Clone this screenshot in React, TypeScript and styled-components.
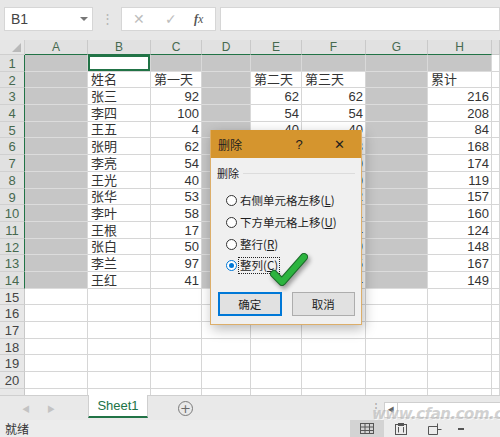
import styled, { createGlobalStyle } from 'styled-components'

const GlobalStyle = createGlobalStyle`
  html, body { margin: 0; padding: 0; }
  body {
    width: 500px;
    height: 437px;
    overflow: hidden;
    background: #fff;
    font-family: "Liberation Sans", "Noto Sans CJK SC", sans-serif;
  }
`

type Val = string | number | null

const COLS = [63, 63, 51, 49, 51, 64, 62, 64]
const LETTERS = ['A', 'B', 'C', 'D', 'E', 'F', 'G', 'H', '']
const ROW_H = 16.7

const data: Val[][] = [
  [null, null, null, null, null, null, null, null],
  [null, '姓名', '第一天', null, '第二天', '第三天', null, '累计'],
  [null, '张三', 92, null, 62, 62, null, 216],
  [null, '李四', 100, null, 54, 54, null, 208],
  [null, '王五', 4, null, 40, 40, null, 84],
  [null, '张明', 62, null, 53, 53, null, 168],
  [null, '李亮', 54, null, 60, 60, null, 174],
  [null, '王光', 40, null, 39, 40, null, 119],
  [null, '张华', 53, null, 52, 52, null, 157],
  [null, '李叶', 58, null, 51, 51, null, 160],
  [null, '王根', 17, null, 53, 54, null, 124],
  [null, '张白', 50, null, 49, 49, null, 148],
  [null, '李兰', 97, null, 35, 35, null, 167],
  [null, '王红', 41, null, 54, 54, null, 149],
]
while (data.length < 21) data.push([null, null, null, null, null, null, null, null])

const isShaded = (r: number, c: number) => {
  if (c > 7) return false
  if (r === 0) return c !== 1
  return r < 14 && (c === 0 || c === 3 || c === 6)
}

const Page = styled.div`
  position: relative;
  width: 500px;
  height: 437px;
  overflow: hidden;
  display: flex;
  flex-direction: column;
  background: #e7e7e7;
`

/* ---------- formula bar ---------- */
const Toolbar = styled.div`
  height: 40px;
  flex: none;
  display: flex;
  align-items: flex-start;
  padding: 7px 0 0 4px;
  box-sizing: border-box;
  background: #e7e7e7;
`

const Box = styled.div<{ $w?: number; $grow?: boolean }>`
  height: 24px;
  box-sizing: border-box;
  background: #fff;
  border: 1px solid #d6d6d6;
  ${p => (p.$w ? `width: ${p.$w}px;` : '')}
  ${p => (p.$grow ? 'flex: 1;' : '')}
  display: flex;
  align-items: center;
`

const NameText = styled.span`
  font-size: 14px;
  color: #444;
  padding-left: 6px;
  flex: 1;
`

const DropArrow = styled.span`
  width: 0;
  height: 0;
  border-left: 4px solid transparent;
  border-right: 4px solid transparent;
  border-top: 4px solid #777;
  margin-right: 4px;
`

const Grip = styled.span`
  width: 28px;
  text-align: center;
  color: #b5b5b5;
  font-size: 13px;
  line-height: 24px;
`

const FxIcon = styled.span<{ $x: number; $dark?: boolean }>`
  position: absolute;
  left: ${p => p.$x}px;
  top: 3px;
  color: ${p => (p.$dark ? '#555' : '#bdbdbd')};
  font-size: ${p => (p.$dark ? '12px' : '14px')};
  font-family: ${p => (p.$dark ? '"Liberation Serif", serif' : '"DejaVu Sans", sans-serif')};
  font-style: ${p => (p.$dark ? 'italic' : 'normal')};
  line-height: 16px;
`

const FxBox = styled(Box)`
  position: relative;
  margin-right: 4px;
`

/* ---------- sheet grid ---------- */
const Sheet = styled.div`
  position: relative;
  height: 355px;
  flex: none;
  overflow: hidden;
  display: grid;
  grid-template-columns: 25px ${COLS.map(c => `${c}px`).join(' ')} 1fr;
  grid-template-rows: 15px;
  grid-auto-rows: ${ROW_H}px;
  background: #fff;
`

const Corner = styled.div`
  position: relative;
  background: #e6e6e6;
  border-right: 1px solid #cfcfcf;
  border-bottom: 1px solid #cfcfcf;
  box-sizing: border-box;
  &::after {
    content: '';
    position: absolute;
    right: 3px;
    bottom: 2px;
    width: 0;
    height: 0;
    border-left: 9px solid transparent;
    border-bottom: 9px solid #b9b9b9;
  }
`

const ColHead = styled.div<{ $sel: boolean }>`
  box-sizing: border-box;
  background: #e1e1e1;
  border-right: 1px solid #c9c9c9;
  border-bottom: 1px solid ${p => (p.$sel ? '#217346' : '#c9c9c9')};
  text-align: center;
  font-size: 12px;
  line-height: 15px;
  color: #46694f;
`

const RowHead = styled.div<{ $sel: boolean }>`
  box-sizing: border-box;
  background: ${p => (p.$sel ? '#e1e1e1' : '#e8e8e8')};
  border-right: 1px solid ${p => (p.$sel ? '#217346' : '#c9c9c9')};
  border-bottom: 1px solid #d0d0d0;
  text-align: center;
  font-size: 13px;
  line-height: 17px;
  color: ${p => (p.$sel ? '#46694f' : '#444')};
`

const Cell = styled.div<{ $shade: boolean; $num: boolean; $active: boolean }>`
  box-sizing: border-box;
  border-right: 1px solid ${p => (p.$shade ? '#d9d9d9' : '#d6d6d6')};
  border-bottom: 1px solid ${p => (p.$shade ? '#dcdcdc' : '#d6d6d6')};
  background: ${p => (p.$shade ? '#c6c6c6' : '#fff')};
  display: flex;
  align-items: flex-end;
  justify-content: ${p => (p.$num ? 'flex-end' : 'flex-start')};
  padding: 0 2px 0 3px;
  font-size: 13px;
  line-height: 15px;
  color: #333;
  white-space: nowrap;
  overflow: hidden;
  ${p => (p.$active ? 'box-shadow: inset 0 0 0 2px #217346;' : '')}
`

/* ---------- dialog ---------- */
const Dialog = styled.div`
  position: absolute;
  left: 210px;
  top: 90px;
  width: 152px;
  height: 195px;
  box-sizing: border-box;
  background: #f0f0f0;
  border: 1px solid #dcae6a;
  border-top: none;
  box-shadow: 2px 4px 12px rgba(0, 0, 0, 0.28);
  display: flex;
  flex-direction: column;
  font-family: "Noto Sans CJK SC", "Liberation Sans", sans-serif;
  color: #1e1e1e;
`

const TitleBar = styled.div`
  height: 28px;
  flex: none;
  background: #d5952e;
  display: flex;
  align-items: center;
  padding-left: 7px;
  font-size: 12px;
`

const TitleText = styled.span`
  flex: 1;
`

const TitleBtn = styled.span<{ $w: number }>`
  width: ${p => p.$w}px;
  text-align: center;
  font-family: "Liberation Sans", sans-serif;
  font-size: 13px;
`

const Body = styled.div`
  position: relative;
  flex: 1;
  padding: 8px 6px 0 6px;
  display: flex;
  flex-direction: column;
`

const Group = styled.div`
  display: flex;
  align-items: center;
  gap: 4px;
  font-size: 11px;
  height: 14px;
  margin-bottom: 10px;
  &::after {
    content: '';
    flex: 1;
    height: 1px;
    background: #dcdcdc;
  }
`

const Option = styled.div`
  display: flex;
  align-items: center;
  height: 21.7px;
  padding-left: 9px;
  font-size: 11.5px;
  gap: 2px;
`

const Radio = styled.span<{ $on?: boolean }>`
  width: 11px;
  height: 11px;
  box-sizing: border-box;
  border-radius: 50%;
  background: #fff;
  border: 1px solid ${p => (p.$on ? '#0078d7' : '#333')};
  display: flex;
  align-items: center;
  justify-content: center;
  &::after {
    content: '';
    width: 5px;
    height: 5px;
    border-radius: 50%;
    background: ${p => (p.$on ? '#0078d7' : 'transparent')};
  }
`

const Label = styled.span<{ $focus?: boolean }>`
  padding: 0 1px;
  line-height: 15px;
  ${p => (p.$focus ? 'outline: 1px dotted #222; outline-offset: 0;' : '')}
  u { text-underline-offset: 1px; }
`

const Buttons = styled.div`
  display: flex;
  gap: 10px;
  margin-top: auto;
  margin-bottom: 8px;
  padding-left: 1px;
`

const Btn = styled.button<{ $primary?: boolean }>`
  width: 64px;
  height: 24px;
  box-sizing: border-box;
  background: #e1e1e1;
  border: ${p => (p.$primary ? '2px solid #0078d7' : '1px solid #adadad')};
  font-family: "Noto Sans CJK SC", sans-serif;
  font-size: 11.5px;
  color: #1e1e1e;
  padding: 0;
`

const Check = styled.svg`
  position: absolute;
  left: 57px;
  top: 92px;
  filter: drop-shadow(2px 3px 2px rgba(0, 0, 0, 0.35));
`

/* ---------- sheet tabs & status ---------- */
const TabBar = styled.div`
  height: 25px;
  flex: none;
  display: flex;
  align-items: stretch;
  background: #e9e9e9;
  border-top: 1px solid #cfcfcf;
  box-sizing: border-box;
`

const Nav = styled.div`
  width: 88px;
  display: flex;
  align-items: center;
  gap: 17px;
  padding-left: 22px;
  box-sizing: border-box;
  color: #c3c3c3;
  font-size: 8px;
`

const Tab = styled.div`
  width: 60px;
  height: 23px;
  margin-top: -1px;
  box-sizing: border-box;
  background: #fff;
  border-left: 1px solid #cfcfcf;
  border-right: 1px solid #cfcfcf;
  border-bottom: 2px solid #217346;
  color: #217346;
  font-size: 13px;
  text-align: center;
  line-height: 21px;
`

const AddBtn = styled.div`
  width: 13px;
  height: 13px;
  margin: 5px 0 0 30px;
  border: 1px solid #7a7a7a;
  border-radius: 50%;
  color: #6a6a6a;
  font-size: 13px;
  line-height: 13px;
  text-align: center;
  font-family: "DejaVu Sans", sans-serif;
`

const TabGrip = styled.div`
  margin-left: auto;
  width: 16px;
  color: #aaa;
  font-size: 12px;
  line-height: 24px;
  text-align: center;
`

const HScroll = styled.div`
  width: 115px;
  height: 14px;
  margin-top: 6px;
  background: #fff;
  border: 1px solid #cfcfcf;
  border-right: none;
  display: flex;
  align-items: center;
  font-size: 7px;
  color: #666;
  span {
    width: 12px;
    height: 14px;
    line-height: 14px;
    text-align: center;
    border-right: 1px solid #cfcfcf;
  }
`

const StatusBar = styled.div`
  flex: 1;
  display: flex;
  align-items: stretch;
  background: #ececec;
  font-family: "Noto Sans CJK SC", sans-serif;
  font-size: 12px;
  color: #333;
`

const Ready = styled.span`
  padding-left: 5px;
  line-height: 17px;
`

const Views = styled.div`
  margin-left: auto;
  display: flex;
  align-items: center;
  padding-right: 36px;
`

const ViewBtn = styled.div<{ $on?: boolean }>`
  width: 34px;
  height: 17px;
  display: flex;
  align-items: center;
  justify-content: center;
  background: ${p => (p.$on ? '#d3d3d3' : 'transparent')};
`

const Minus = styled.div`
  width: 6px;
  height: 2px;
  background: #555;
  margin-left: 6px;
`

const Watermark = styled.div`
  position: absolute;
  left: 372px;
  top: 405px;
  font-family: "DejaVu Sans", sans-serif;
  font-style: italic;
  font-weight: bold;
  font-size: 15px;
  letter-spacing: -0.5px;
  color: rgba(170, 170, 170, 0.55);
  text-shadow: 1px 1px 0 rgba(255, 255, 255, 0.6);
  pointer-events: none;
`

const options = [
  { text: '右侧单元格左移(', key: 'L' },
  { text: '下方单元格上移(', key: 'U' },
  { text: '整行(', key: 'R' },
  { text: '整列(', key: 'C' },
]

export default function App() {
  return (
    <Page>
      <GlobalStyle />
      <Toolbar>
        <Box $w={89}>
          <NameText>B1</NameText>
          <DropArrow />
        </Box>
        <Grip>⋮</Grip>
        <FxBox $w={95}>
          <FxIcon $x={11}>✕</FxIcon>
          <FxIcon $x={43}>✓</FxIcon>
          <FxIcon $x={72} $dark>
            <b>f</b>x
          </FxIcon>
        </FxBox>
        <Box $grow />
      </Toolbar>

      <Sheet>
        <Corner />
        {LETTERS.map((l, i) => (
          <ColHead key={i} $sel={i < 8}>
            {l}
          </ColHead>
        ))}
        {data.map((row, r) => [
          <RowHead key={`h${r}`} $sel={r < 14}>
            {r < 20 ? r + 1 : ''}
          </RowHead>,
          ...[...row, null].map((v, c) => (
            <Cell
              key={`${r}-${c}`}
              $shade={isShaded(r, c)}
              $num={typeof v === 'number'}
              $active={r === 0 && c === 1}
            >
              {v}
            </Cell>
          )),
        ])}

        <Dialog>
          <TitleBar>
            <TitleText>删除</TitleText>
            <TitleBtn $w={36}>?</TitleBtn>
            <TitleBtn $w={44}>✕</TitleBtn>
          </TitleBar>
          <Body>
            <Group>删除</Group>
            {options.map((o, i) => (
              <Option key={o.key}>
                <Radio $on={i === 3} />
                <Label $focus={i === 3}>
                  {o.text}
                  <u>{o.key}</u>)
                </Label>
              </Option>
            ))}
            <Buttons>
              <Btn $primary>确定</Btn>
              <Btn>取消</Btn>
            </Buttons>
            <Check width="44" height="40" viewBox="0 0 44 40">
              <path d="M6 24 L14 32 L36 7" fill="none" stroke="#1d6a2b" strokeWidth="8" strokeLinecap="round" strokeLinejoin="round" />
              <path d="M6 24 L14 32 L36 7" fill="none" stroke="#2cb43f" strokeWidth="6" strokeLinecap="round" strokeLinejoin="round" />
            </Check>
          </Body>
        </Dialog>
      </Sheet>

      <TabBar>
        <Nav>
          <span>◀</span>
          <span>▶</span>
        </Nav>
        <Tab>Sheet1</Tab>
        <AddBtn>+</AddBtn>
        <TabGrip>⋮</TabGrip>
        <HScroll>
          <span>◀</span>
        </HScroll>
      </TabBar>

      <StatusBar>
        <Ready>就绪</Ready>
        <Views>
          <ViewBtn $on>
            <svg width="14" height="11" viewBox="0 0 14 11">
              <rect x="0.5" y="0.5" width="13" height="10" fill="none" stroke="#555" />
              <path d="M5 0.5V10.5M9.5 0.5V10.5M0.5 4H13.5M0.5 7.5H13.5" stroke="#555" />
            </svg>
          </ViewBtn>
          <ViewBtn>
            <svg width="12" height="12" viewBox="0 0 12 12">
              <rect x="0.5" y="1.5" width="11" height="10" fill="none" stroke="#555" />
              <rect x="3" y="0" width="6" height="3" fill="#555" />
              <path d="M3.5 4V9.5M8.5 4V9.5" stroke="#555" />
            </svg>
          </ViewBtn>
          <ViewBtn>
            <svg width="14" height="12" viewBox="0 0 14 12">
              <path d="M0.5 3.5H9.5V11.5H0.5Z" fill="none" stroke="#555" />
              <path d="M9.5 0.5V6.5H13.5" fill="none" stroke="#555" />
            </svg>
          </ViewBtn>
          <Minus />
        </Views>
      </StatusBar>

      <Watermark>www.cfan.com.cn</Watermark>
    </Page>
  )
}
